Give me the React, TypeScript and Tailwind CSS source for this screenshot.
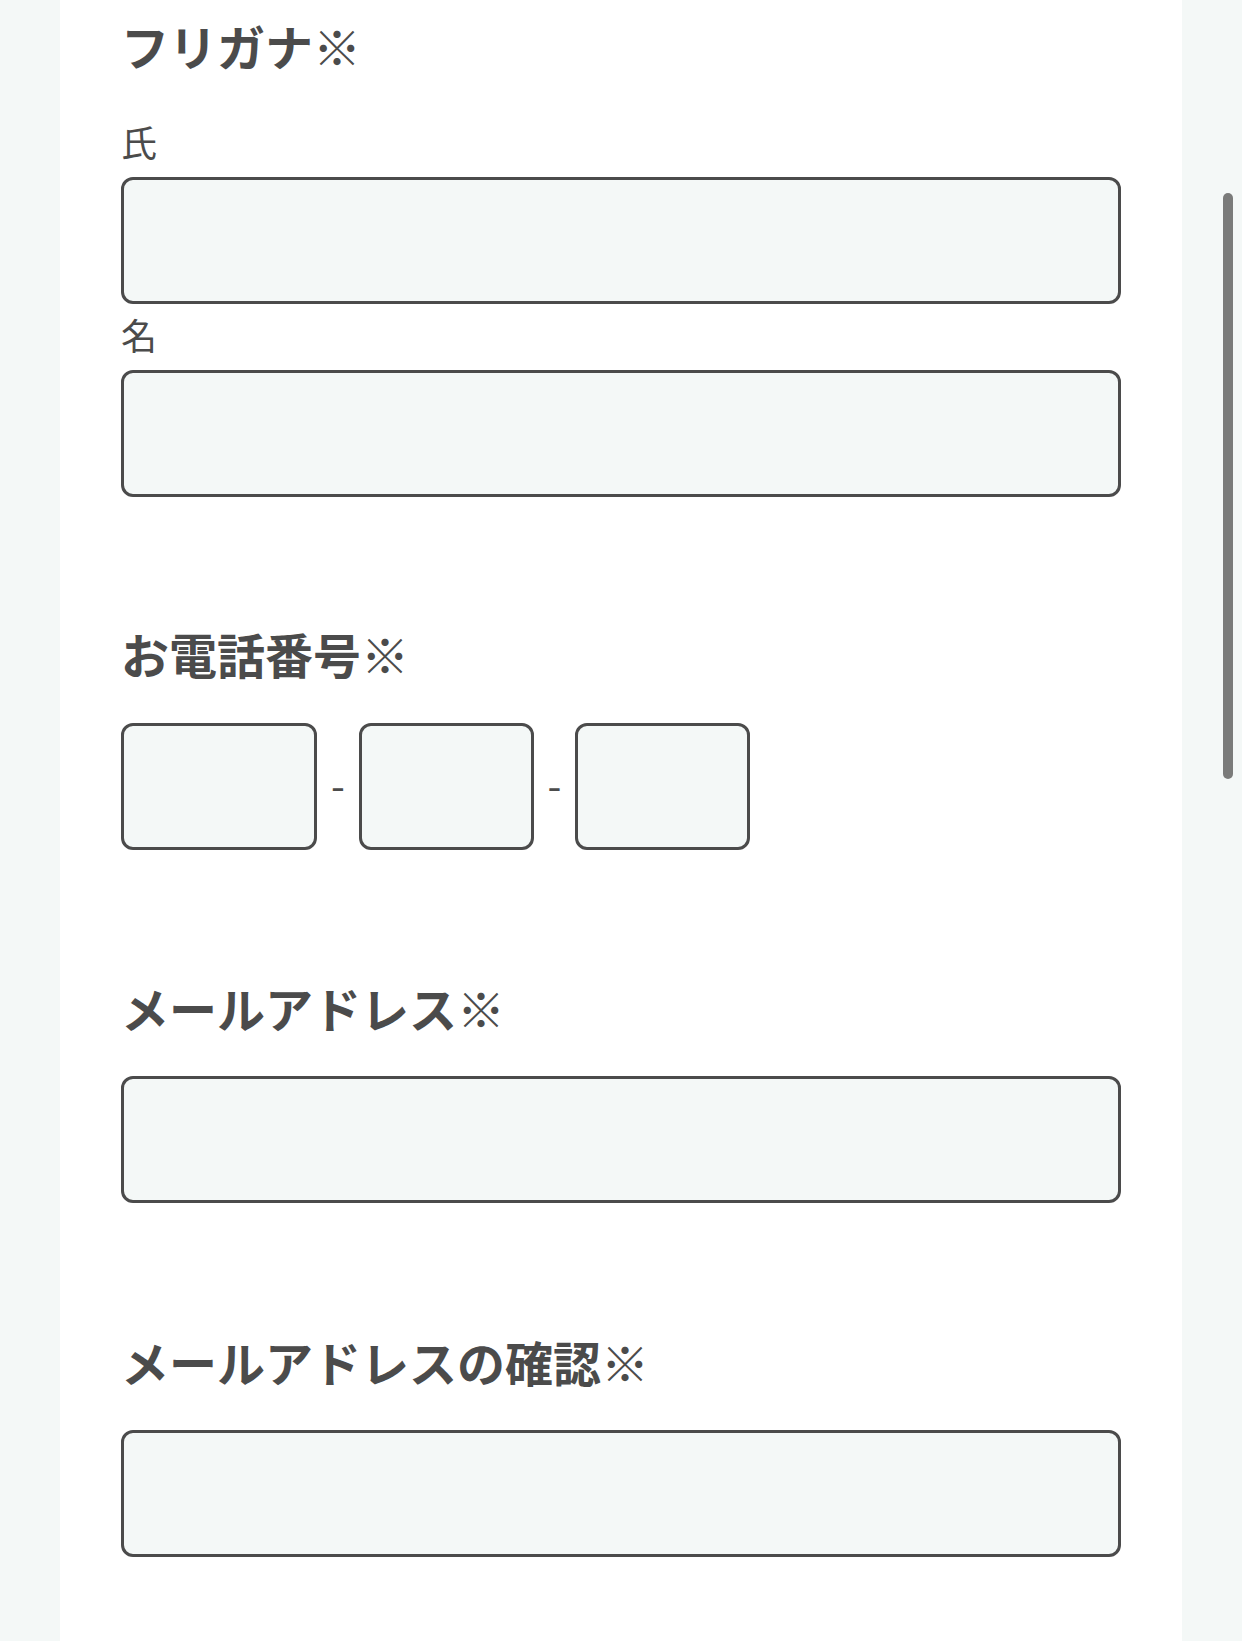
const font = { fontFamily: '"Noto Sans CJK JP", "Noto Sans", sans-serif' };

function Title({ children, className = '' }: { children: React.ReactNode; className?: string }) {
  return (
    <h2 className={`text-[48px] leading-[69px] font-bold text-[#4b4b4b] ${className}`}>{children}</h2>
  );
}

function TextBox({ className = 'w-[1000px]' }: { className?: string }) {
  return (
    <input
      type="text"
      className={`block h-[127px] rounded-[12px] border-[3px] border-[#4b4b4b] bg-[#f4f8f7] ${className}`}
    />
  );
}

export default function App() {
  return (
    <div className="relative min-h-[1641px] bg-[#f4f8f7]" style={font}>
      <div className="ml-[60px] w-[1122px] min-h-[1641px] bg-white px-[61px] pt-[11px]">
        {/* フリガナ */}
        <Title>フリガナ※</Title>
        <p className="mt-[34px] text-[36px] leading-[54px] text-[#4b4b4b]">氏</p>
        <TextBox className="mt-[9px] w-[1000px]" />
        <p className="mt-[3px] text-[36px] leading-[54px] text-[#4b4b4b]">名</p>
        <TextBox className="mt-[9px] w-[1000px]" />

        {/* 電話番号 */}
        <Title className="mt-[122px]">お電話番号※</Title>
        <div className="mt-[35px] flex items-center">
          <TextBox className="w-[196px]" />
          <span className="w-[42px] -translate-y-[3px] text-center text-[40px] leading-none text-[#4b4b4b]">-</span>
          <TextBox className="w-[175px]" />
          <span className="w-[41px] -translate-y-[3px] text-center text-[40px] leading-none text-[#4b4b4b]">-</span>
          <TextBox className="w-[175px]" />
        </div>

        {/* メールアドレス */}
        <Title className="mt-[123px]">メールアドレス※</Title>
        <TextBox className="mt-[34px] w-[1000px]" />

        <Title className="mt-[124px]">メールアドレスの確認※</Title>
        <TextBox className="mt-[34px] w-[1000px]" />
      </div>

      {/* scrollbar */}
      <div className="absolute left-[1223px] top-[193px] h-[586px] w-[10px] rounded-full bg-[#7a7b7a]" />
    </div>
  );
}
